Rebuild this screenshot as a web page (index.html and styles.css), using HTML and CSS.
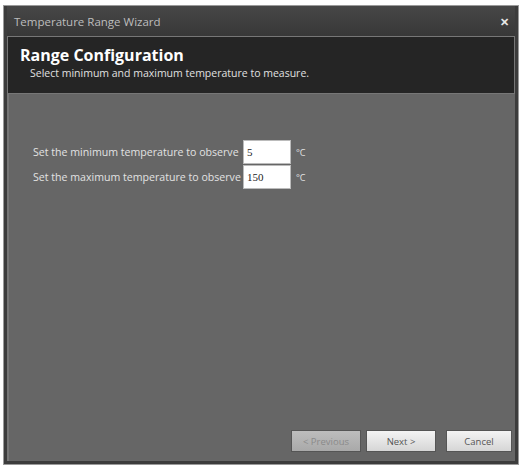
FILE: index.html
```html
<!DOCTYPE html>
<html lang="en">
<head>
  <meta charset="UTF-8" />
  <title>Temperature Range Wizard</title>
  <link rel="stylesheet" href="styles.css">
</head>
<body>
  <div class="window">
    <div class="titlebar">
      <span class="title">Temperature Range Wizard</span>
      <span class="close">&#x2715;</span>
    </div>
    <div class="header">
      <h1>Range Configuration</h1>
      <p>Select minimum and maximum temperature to measure.</p>
    </div>
    <div class="body">
      <div class="fields">
        <div class="row">
          <label for="min">Set the minimum temperature to observe</label>
          <input type="text" id="min" value="5" />
          <span class="unit">°C</span>
        </div>
        <div class="row">
          <label for="max">Set the maximum temperature to observe</label>
          <input type="text" id="max" value="150" />
          <span class="unit">°C</span>
        </div>
      </div>
      <div class="button-group">
        <button class="btn" disabled>&lt; Previous</button>
        <button class="btn">Next &gt;</button>
        <button class="btn cancel">Cancel</button>
      </div>
    </div>
  </div>
</body>
</html>
```

FILE: styles.css
```css
* {
  box-sizing: border-box;
}

body {
  margin: 0;
  padding: 5px 2px 3px 3px;
  background: #fff;
  font-family: 'Open Sans', sans-serif;
  height: 468px;
}

.window {
  height: 460px;
  display: flex;
  flex-direction: column;
  background: #3c3c3c;
  border: 1px solid #9a9a9a;
  padding: 0 3px 3px 3px;
}

.titlebar {
  height: 30px;
  display: flex;
  align-items: center;
  justify-content: space-between;
  padding: 0 6px 0 7px;
  color: #bdbdbd;
  font-size: 11.5px;
  background: linear-gradient(#474747, #383838);
}

.close {
  color: #e8e8e8;
  font-size: 11px;
  font-weight: bold;
}

.header {
  background: #252525;
  border: 1px solid #777;
  height: 58px;
  padding: 7px 12px;
}

.header h1 {
  margin: 0;
  color: #fff;
  font-size: 16px;
  font-weight: bold;
  line-height: 22px;
}

.header p {
  margin: 0 0 0 10px;
  color: #e0e0e0;
  font-size: 10.5px;
  line-height: 14px;
}

.body {
  flex: 1;
  background: #666;
  border-left: 2px solid #777;
  display: flex;
  flex-direction: column;
  justify-content: space-between;
  padding: 46px 3px 9px 24px;
}

.fields {
  display: flex;
  flex-direction: column;
  gap: 1px;
}

.row {
  display: flex;
  align-items: center;
  height: 24px;
}

.row label {
  width: 210px;
  color: #e2e2e2;
  font-size: 10.6px;
  white-space: nowrap;
  overflow: hidden;
}

.row input {
  width: 48px;
  height: 24px;
  border: 1px solid #bbb;
  background: #fff;
  font-family: 'Liberation Serif', serif;
  font-size: 11px;
  padding: 0 3px;
  color: #222;
}

.unit {
  color: #e2e2e2;
  font-size: 9px;
  margin-left: 5px;
}

.button-group {
  display: flex;
  justify-content: flex-end;
  gap: 5px;
}

.btn {
  width: 70px;
  height: 22px;
  border: 1px solid #555;
  background: linear-gradient(#f4f4f4, #d6d6d6);
  color: #555;
  font-family: 'Open Sans', sans-serif;
  font-size: 9.5px;
}

.btn:disabled {
  background: linear-gradient(#bdbdbd, #a9a9a9);
  color: #8a8a8a;
}

.cancel {
  margin-left: 5px;
  width: 66px;
}
```
